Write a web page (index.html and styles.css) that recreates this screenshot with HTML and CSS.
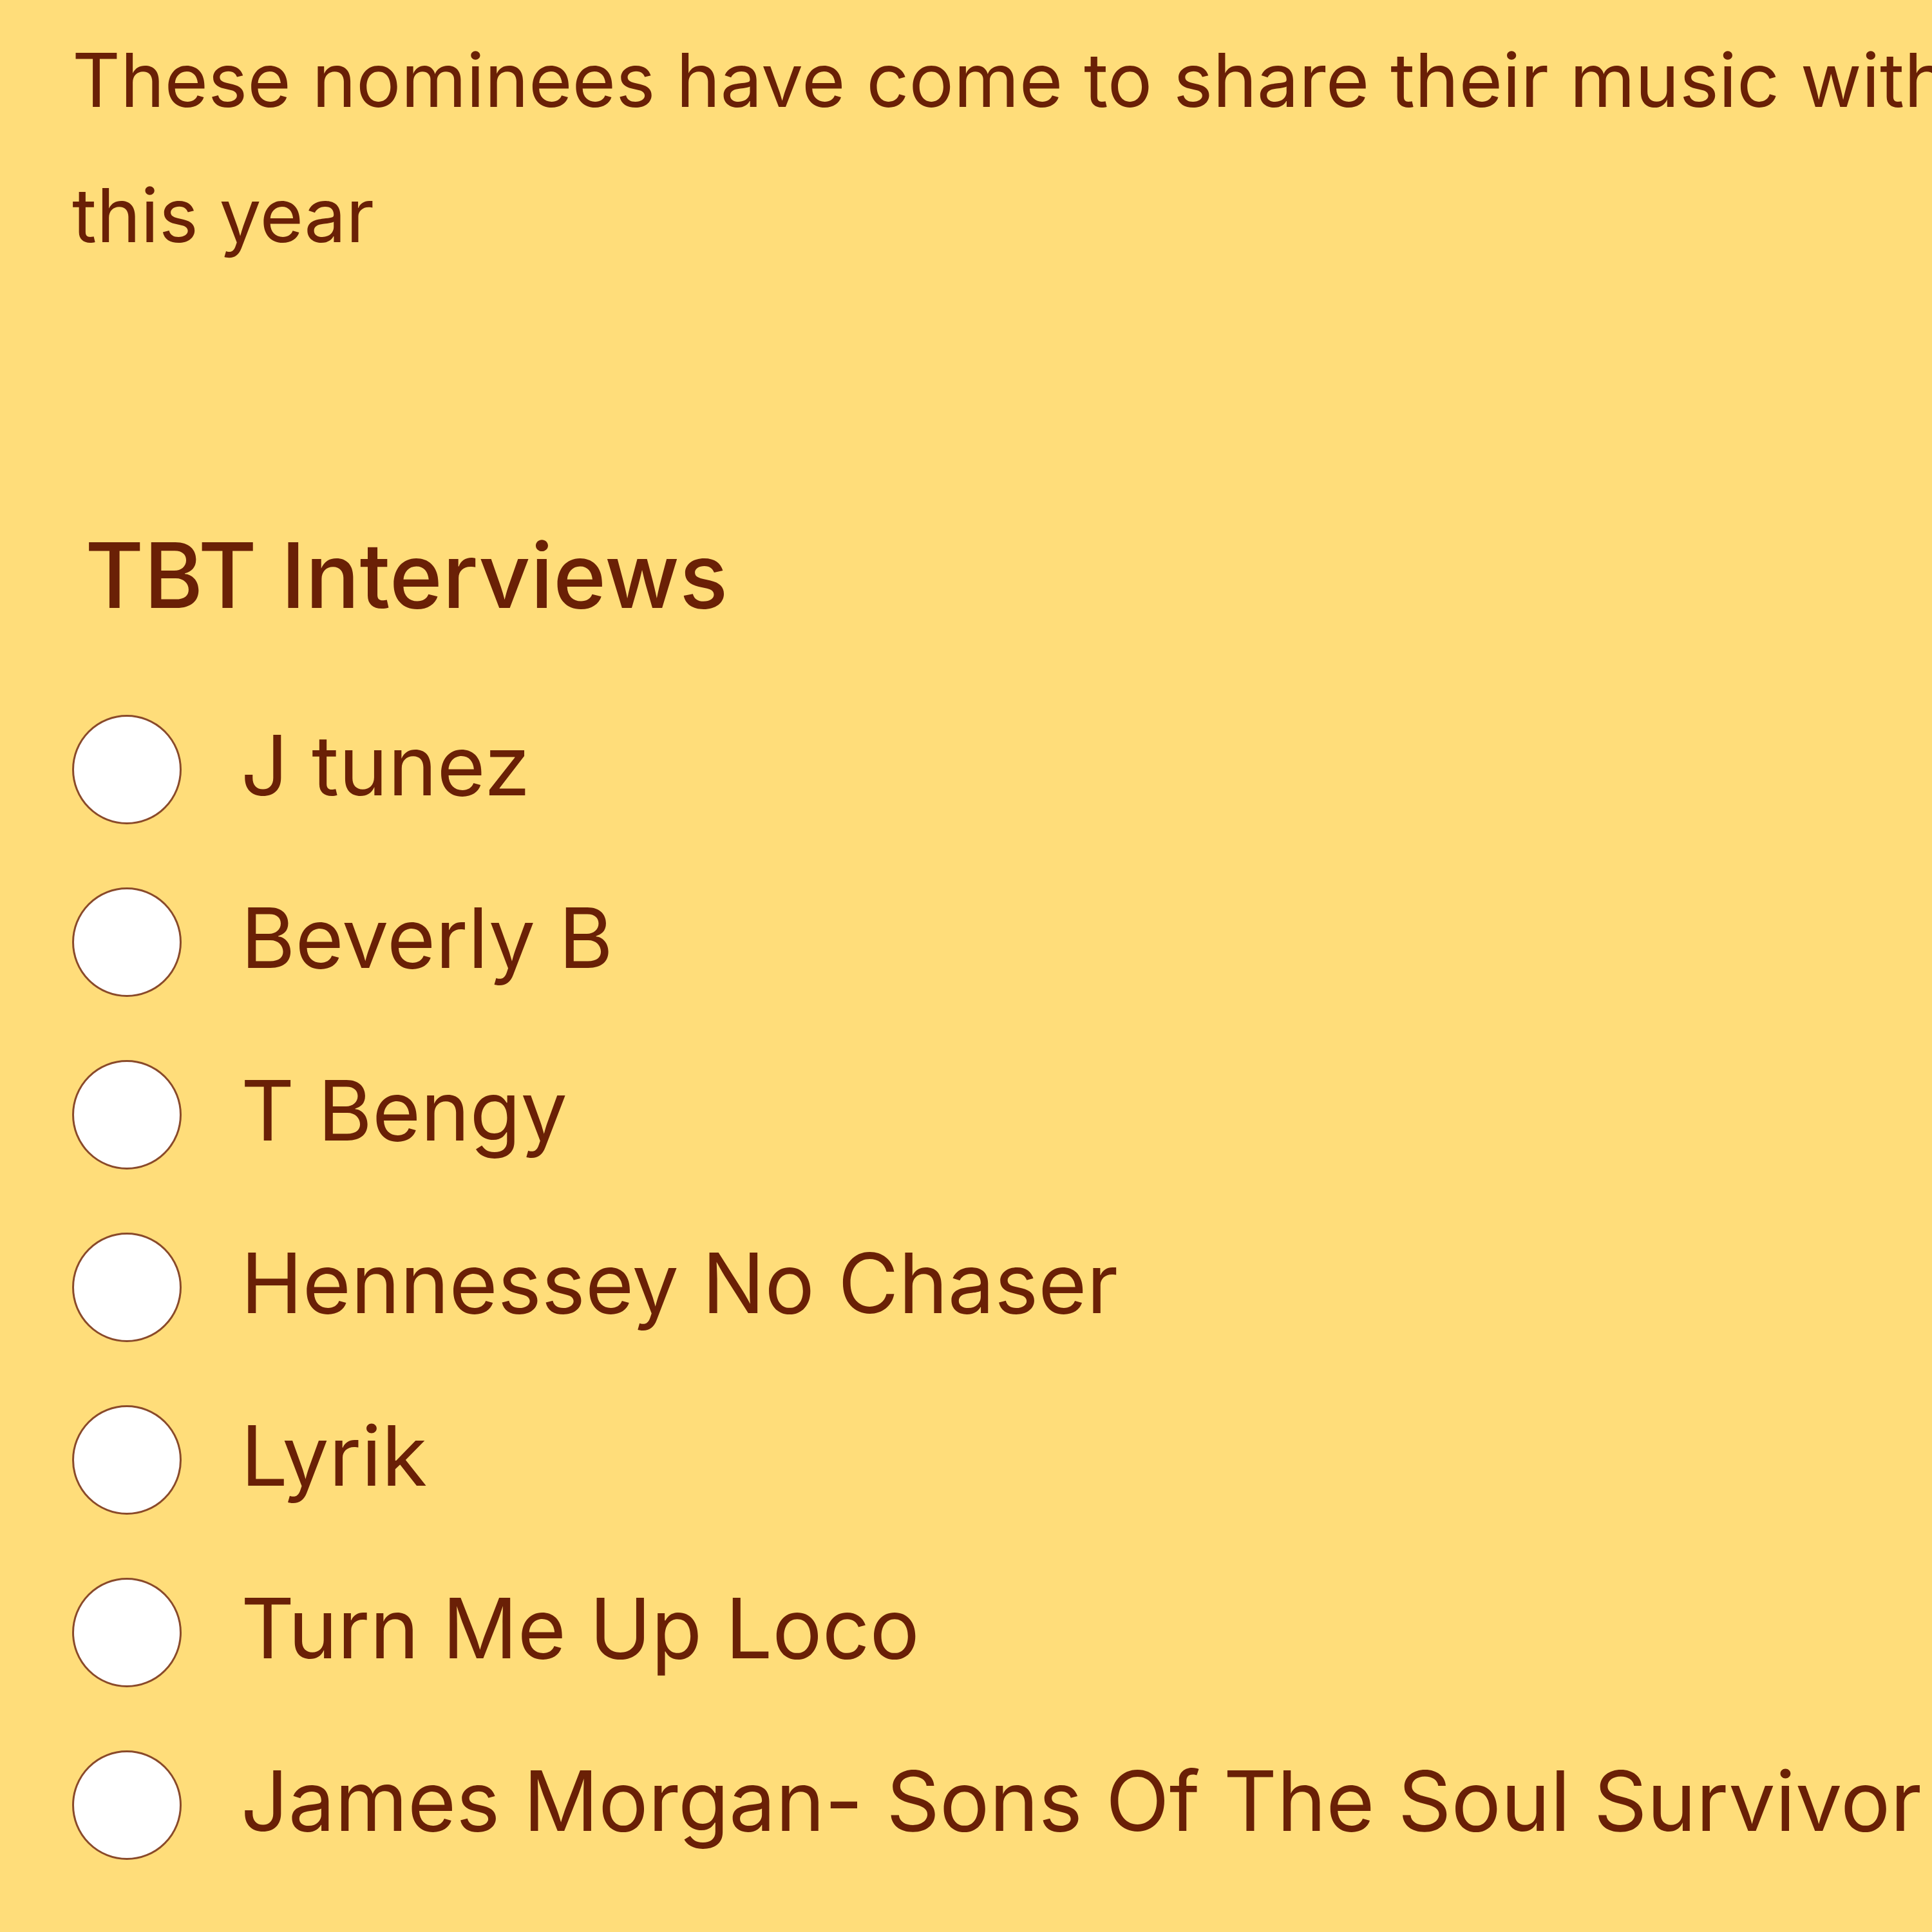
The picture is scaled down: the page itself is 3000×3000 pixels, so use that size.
FILE: index.html
```html
<!DOCTYPE html>
<html lang="en">
<head>
    <meta charset="UTF-8">
    <meta name="viewport" content="width=device-width, initial-scale=1.0">
    <title>TBT Interviews</title>
    <link rel="stylesheet" href="styles.css">
</head>
<body>
    <div class="container">
        <p class="intro">These nominees have come to share their music with this year</p>

        <form id="voteForm" class="poll">
            <h2>TBT Interviews</h2>
            <label class="option">
                <input type="radio" name="interview" value="J tunez"> <span>J tunez</span>
            </label>
            <label class="option">
                <input type="radio" name="interview" value="Beverly B"> <span>Beverly B</span>
            </label>
            <label class="option">
                <input type="radio" name="interview" value="T Bengy"> <span>T Bengy</span>
            </label>
            <label class="option">
                <input type="radio" name="interview" value="Hennessey No Chaser"> <span>Hennessey No Chaser</span>
            </label>
            <label class="option">
                <input type="radio" name="interview" value="Lyrik"> <span>Lyrik</span>
            </label>
            <label class="option">
                <input type="radio" name="interview" value="Turn Me Up Loco"> <span>Turn Me Up Loco</span>
            </label>
            <label class="option">
                <input type="radio" name="interview" value="James Morgan- Sons Of The Soul Survivor"> <span>James Morgan- Sons Of The Soul Survivor</span>
            </label>
        </form>
    </div>
</body>
</html>
```

FILE: styles.css
```css
html {
    overflow: hidden;
}
body {
    font-family: Inter, "Noto Sans", sans-serif;
    background-color: #ffdd7a;
    color: #6a2006;
    margin: 0;
    padding: 0;
}
.container {
    width: 3300px;
    padding: 19px 0 0 112px;
}
.intro {
    max-width: 3000px;
    font-size: 116px;
    line-height: 210px;
    margin: 0;
}
h2 {
    font-size: 140px;
    font-weight: 500;
    line-height: 166px;
    margin: 371px 0 85px 20px;
}
.option {
    display: flex;
    align-items: center;
    gap: 92px;
    height: 268px;
    font-size: 129px;
    white-space: nowrap;
}
.option span {
    padding-bottom: 14px;
}
input[type="radio"] {
    appearance: none;
    -webkit-appearance: none;
    width: 170px;
    height: 170px;
    margin: 0;
    flex-shrink: 0;
    background: #ffffff;
    border: 3px solid #8a4a2a;
    border-radius: 50%;
    cursor: pointer;
}
input[type="radio"]:checked {
    background: radial-gradient(circle, #6a2006 35%, #ffffff 37%);
}
```
